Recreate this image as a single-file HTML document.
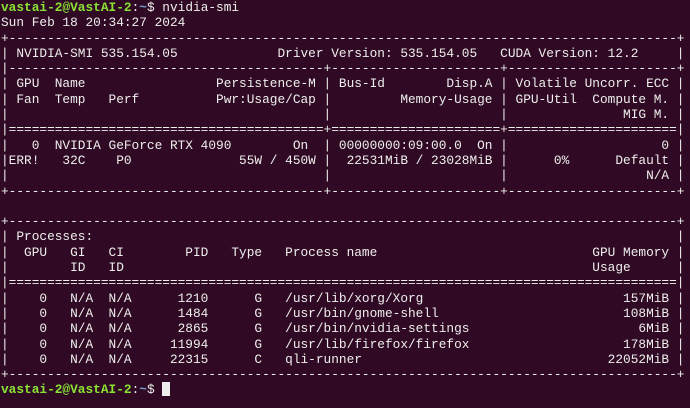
<!DOCTYPE html>
<html><head><meta charset="utf-8"><style>
html,body{margin:0;padding:0;background:#300a24;width:690px;height:408px;overflow:hidden}
pre{margin:0;padding:0 0 0 1px;font-family:"Liberation Mono",monospace;font-size:12.8px;line-height:15.3px;color:#eeeeec;white-space:pre}
.g{color:#8ae234;font-weight:bold}
.b{color:#729fcf;font-weight:bold}
.c{background:#eeeeec;display:inline-block;width:7.5px;height:14px;vertical-align:-3px}
</style></head><body><pre><span class="g">vastai-2@VastAI-2</span>:<span class="b">~</span>$ nvidia-smi
Sun Feb 18 20:34:27 2024
+---------------------------------------------------------------------------------------+
| NVIDIA-SMI 535.154.05             Driver Version: 535.154.05   CUDA Version: 12.2     |
|-----------------------------------------+----------------------+----------------------+
| GPU  Name                 Persistence-M | Bus-Id        Disp.A | Volatile Uncorr. ECC |
| Fan  Temp   Perf          Pwr:Usage/Cap |         Memory-Usage | GPU-Util  Compute M. |
|                                         |                      |               MIG M. |
|=========================================+======================+======================|
|   0  NVIDIA GeForce RTX 4090        On  | 00000000:09:00.0  On |                    0 |
|ERR!   32C    P0              55W / 450W |  22531MiB / 23028MiB |      0%      Default |
|                                         |                      |                  N/A |
+-----------------------------------------+----------------------+----------------------+

+---------------------------------------------------------------------------------------+
| Processes:                                                                            |
|  GPU   GI   CI        PID   Type   Process name                            GPU Memory |
|        ID   ID                                                             Usage      |
|=======================================================================================|
|    0   N/A  N/A      1210      G   /usr/lib/xorg/Xorg                          157MiB |
|    0   N/A  N/A      1484      G   /usr/bin/gnome-shell                        108MiB |
|    0   N/A  N/A      2865      G   /usr/bin/nvidia-settings                      6MiB |
|    0   N/A  N/A     11994      G   /usr/lib/firefox/firefox                    178MiB |
|    0   N/A  N/A     22315      C   qli-runner                                22052MiB |
+---------------------------------------------------------------------------------------+
<span class="g">vastai-2@VastAI-2</span>:<span class="b">~</span>$ <span class="c"></span></pre></body></html>
